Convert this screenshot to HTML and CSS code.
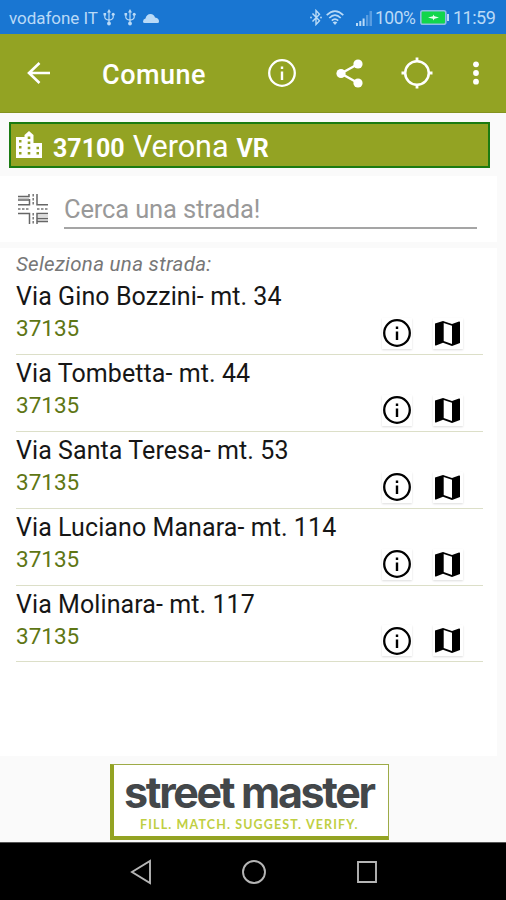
FILE: index.html
```html
<!DOCTYPE html>
<html lang="it">
<head>
<meta charset="utf-8">
<title>Comune</title>
<link rel="stylesheet" href="styles.css">
</head>
<body>
<svg class="defs" width="0" height="0">
  <symbol id="usb" viewBox="0 0 12 17"><path d="M6 3v11M1.800 5v3.200Q2 10.300 6 11.200 10 10.300 10.200 8.200V5" fill="none" stroke="currentColor" stroke-width="1.200"/><path d="M6 0l2 3.500H4zM.5 4h2.600v2.600H.5z"/><circle cx="10.200" cy="5.300" r="1.500"/><circle cx="6" cy="14.500" r="1.900"/></symbol>
  <symbol id="info" viewBox="0 0 28 28"><circle cx="14" cy="14" r="12.800" fill="none" stroke="currentColor" stroke-width="2.300"/><path d="M12.800 12.500h2.400V21h-2.400zM12.800 7.500h2.400v2.600h-2.400z"/></symbol>
  <symbol id="map" viewBox="0 0 26 27"><path d="M0 3.500L8 1l9 3 7-2.500q1-.3 1 .7V23l-8 3-9-3.200L1 25.500q-1 .4-1-.8z"/><path d="M8.700 3l8.300 2.700v18.200L8.700 21z" fill="#fff"/></symbol>
</svg>

<header class="status">
  <span class="carrier">vodafone IT</span>
  <svg class="usb"><use href="#usb"/></svg>
  <svg class="usb usb-second"><use href="#usb"/></svg>
  <svg class="cloud" viewBox="0 0 16 10"><path d="M1.500 10Q0 10 0 8.500 0 6 2.500 5.500 3.500 1 7.500 1q3.500 0 4.500 3.500Q16 5 16 8.500q0 1.500-1.500 1.500z"/></svg>
  <svg class="bt" viewBox="0 0 12 17"><path d="M2.500 4.500l7 7.300L6 15.500v-14l3.500 3.700-7 7.300" fill="none" stroke="currentColor" stroke-width="1.400"/><circle cx="1" cy="8.500" r=".9"/><circle cx="11" cy="8.500" r=".9"/></svg>
  <svg class="wifi" viewBox="0 0 18 15"><g fill="none" stroke="currentColor" stroke-width="1.700"><path d="M.7 5.200Q9-2.800 17.300 5.200M3.300 8Q9 2.300 14.700 8M5.800 10.700Q9 7.500 12.200 10.700"/></g><path d="M6.700 12.300Q9 10.500 11.300 12.300L9 15z"/></svg>
  <svg class="signal" viewBox="0 0 17 16"><path d="M0 13h2v3H0zM3.300 11h2v5h-2zM6.600 8.500h2V16h-2z"/><path d="M10 5h2.300v11H10zM13.500 1h2.500v15h-2.500z" opacity=".4"/></svg>
  <span class="percent">100%</span>
  <svg class="battery" viewBox="0 0 29 15"><rect x=".8" y=".8" width="25" height="13.400" rx="2" fill="#12d64c" stroke="#8fbde8" stroke-width="1.600"/><path d="M27 4h2v7h-2z"/><path d="M8 7.500l5-1.300V4.500l1.500 1.800 4.500 1.200-4.500 1.200-1.500 1.800V8.800z" fill="#e8fff0"/></svg>
  <span class="clock">11:59</span>
</header>

<nav class="toolbar">
  <svg class="back" viewBox="0 0 24 22"><path d="M23 11H2M12.500 1L2 11l10.500 10" fill="none" stroke="currentColor" stroke-width="2.600"/></svg>
  <h1>Comune</h1>
  <svg class="tool-info"><use href="#info"/></svg>
  <svg class="share" viewBox="0 0 27 29"><path d="M22 5L5 14.500 22 24" fill="none" stroke="currentColor" stroke-width="2.400"/><circle cx="22" cy="5" r="4.600"/><circle cx="5" cy="14.500" r="4.600"/><circle cx="22" cy="24" r="4.600"/></svg>
  <svg class="locate" viewBox="0 0 32 32"><circle cx="16" cy="16" r="11.800" fill="none" stroke="currentColor" stroke-width="2.500"/><path d="M14.600.5h2.800V5h-2.800zM14.600 27h2.800v4.500h-2.800zM.5 14.600H5v2.800H.5zM27 14.600h4.500v2.800H27z"/></svg>
  <svg class="more" viewBox="0 0 6 24"><circle cx="3" cy="3.300" r="2.900"/><circle cx="3" cy="12" r="2.900"/><circle cx="3" cy="20.700" r="2.900"/></svg>
</nav>

<main>
  <section class="city">
    <svg viewBox="0 0 26 27"><path fill-rule="evenodd" d="M0 6h8.500V4L13 0l4.500 4v8H26v15H0zM3 9v2.500h2.500V9zM3 15v2.500h2.500V15zM3 21v2.500h2.500V21zM11.700 5.500V8h2.600V5.500zM11.700 10.500V13h2.600v-2.500zM11.700 15.700v2.500h2.600v-2.500zM11.700 21v2.500h2.600V21zM20.500 15.700v2.500H23v-2.500zM20.500 21v2.500H23V21z"/></svg>
    <b class="zip">37100</b><span class="name">Verona</span><b class="prov">VR</b>
  </section>

  <section class="search">
    <svg viewBox="0 0 30 30"><path d="M0 2.500h11V0M0 6h11.500M0 10.800h11.500V5M19 0v10.800h11M0 19.500h11.500V30M19 30V19.500h11M19 24.500h11M19 27.500h11"/><path class="lane" d="M0 4.300h11M20 26h10M20 22h10"/><path class="dash" d="M0 15h11M19 15h11M15.200 0v11M15.200 19v11"/></svg>
    <div class="field">Cerca una strada!</div>
  </section>

  <section class="results">
    <p class="hint">Seleziona una strada:</p>
    <ul>
      <li><div><p class="street">Via Gino Bozzini- mt. 34</p><p class="code">37135</p></div><span class="btn"><svg><use href="#info"/></svg></span><span class="btn"><svg class="map"><use href="#map"/></svg></span></li>
      <li><div><p class="street">Via Tombetta- mt. 44</p><p class="code">37135</p></div><span class="btn"><svg><use href="#info"/></svg></span><span class="btn"><svg class="map"><use href="#map"/></svg></span></li>
      <li><div><p class="street">Via Santa Teresa- mt. 53</p><p class="code">37135</p></div><span class="btn"><svg><use href="#info"/></svg></span><span class="btn"><svg class="map"><use href="#map"/></svg></span></li>
      <li><div><p class="street">Via Luciano Manara- mt. 114</p><p class="code">37135</p></div><span class="btn"><svg><use href="#info"/></svg></span><span class="btn"><svg class="map"><use href="#map"/></svg></span></li>
      <li><div><p class="street">Via Molinara- mt. 117</p><p class="code">37135</p></div><span class="btn"><svg><use href="#info"/></svg></span><span class="btn"><svg class="map"><use href="#map"/></svg></span></li>
    </ul>
  </section>

  <div class="brand">
    <p class="brand-name">street master</p>
    <p class="brand-tag">FILL. MATCH. SUGGEST. VERIFY.</p>
  </div>
</main>

<footer class="navbar">
  <svg viewBox="0 0 22 26"><path d="M20 2v22L2 13z"/></svg>
  <svg viewBox="0 0 26 26"><circle cx="13" cy="13" r="11"/></svg>
  <svg viewBox="0 0 22 24"><path d="M2 2h18v20H2z"/></svg>
</footer>
</body>
</html>
```
FILE: styles.css
```css
* { box-sizing: border-box; }
body { margin: 0; width: 506px; height: 900px; display: flex; flex-direction: column; background: #fafafa; font-family: Roboto, sans-serif; overflow: hidden; }
h1, p, ul { margin: 0; padding: 0; font-weight: 400; }
svg { display: block; flex: none; fill: currentColor; }
.defs { position: absolute; }

.status { flex: none; height: 34px; display: flex; align-items: center; padding: 1px 11px 0 9px; background: #1976d2; color: #b9daf7; font-size: 18px; white-space: nowrap; }
.carrier { width: 94px; font-size: 17px; letter-spacing: -.05px; }
.usb { width: 12px; height: 17px; }
.usb-second { margin-left: 9px; }
.cloud { width: 16px; height: 10px; margin-left: 7px; }
.bt { width: 12px; height: 17px; margin: 0 4px 0 auto; }
.wifi { width: 18px; height: 15px; }
.signal { width: 17px; height: 16px; margin: 0 2px 0 12px; }
.percent { width: 45px; font-size: 17.500px; letter-spacing: -.5px; }
.battery { width: 29px; height: 15px; margin-right: 4px; }
.clock { width: 42px; font-size: 18px; letter-spacing: -.5px; }

.toolbar { flex: none; height: 79px; display: flex; align-items: center; padding: 0 27px 0 27px; background: #93a323; color: #fff; border-bottom: 1px solid #84931f; }
.back { width: 24px; height: 22px; }
.toolbar h1 { margin: 3px auto 0 51px; font-size: 27px; font-weight: 500; line-height: 32px; letter-spacing: .5px; }
.tool-info { width: 28px; height: 28px; margin-right: 40px; }
.share { width: 27px; height: 29px; margin-right: 38px; }
.locate { width: 32px; height: 32px; margin-right: 40px; }
.more { width: 6px; height: 24px; }

main { flex: 1; display: flex; flex-direction: column; min-height: 0; }
.city { flex: none; width: 481px; height: 46px; margin: 9px 0 8px 9px; padding: 0 0 0 5px; display: flex; align-items: baseline; border: 2px solid #1b7b12; background: #93a323; color: #fff; line-height: 46px; }
.city svg { width: 26px; height: 27px; align-self: center; margin-top: -1px; }
.zip { margin-left: 11px; font-size: 25px; }
.name { margin-left: 8px; font-size: 30.500px; }
.prov { margin-left: 8px; font-size: 25px; }

.search { flex: none; width: 497px; height: 66px; margin-bottom: 6px; padding: 18px 20px 0 18px; display: flex; background: #fff; }
.search svg { width: 30px; height: 30px; fill: none; stroke: #666; stroke-width: 1.500; }
.search .lane { stroke: #bbb; stroke-width: 1; }
.search .dash { stroke: #777; stroke-dasharray: 2.500 1.500; }
.field { flex: 1; height: 35px; margin-left: 16px; border-bottom: 2px solid #a5a5a5; color: #999; font-size: 25.500px; line-height: 30px; letter-spacing: -.15px; }

.results { flex: none; width: 497px; height: 508px; padding: 5px 14px 0 16px; background: #fff; }
.hint { height: 25px; font-size: 20.500px; font-style: italic; line-height: 23px; letter-spacing: .3px; color: #777; }
ul { list-style: none; }
li { height: 76.900px; display: flex; align-items: flex-end; border-bottom: 1px solid #dcdfc8; padding-bottom: 5px; }
li div { flex: 1; align-self: stretch; }
.street { margin-top: 4px; font-size: 25px; line-height: 30px; letter-spacing: .08px; color: #161616; white-space: nowrap; }
.code { margin-top: 1px; font-size: 22.500px; line-height: 30px; color: #5e7614; }
.btn { width: 30px; height: 31px; display: flex; align-items: center; justify-content: center; box-shadow: 0 1px 2px #ddd; color: #000; }
.btn + .btn { margin: 0 20px 0 21px; }
.btn svg { width: 28px; height: 28px; }
.btn .map { width: 26px; height: 27px; }

.brand { flex: none; width: 279px; height: 76px; margin: 8px 0 0 110px; border: 1px solid #9dab47; border-left: 4px solid #93a323; border-bottom: 4px solid #93a323; background: #fff; white-space: nowrap; }
.brand-name { height: 52px; padding-left: 10px; color: #43474a; font: 700 43px/54px Inter, sans-serif; letter-spacing: -2.350px; }
.brand-tag { padding-left: 26px; color: #bfcf42; font: 700 12.500px/16px Lato, sans-serif; letter-spacing: 1.130px; }

.navbar { flex: none; height: 58px; display: grid; grid-template-columns: 22px 26px 22px; column-gap: 89px; align-items: center; padding-left: 130px; border-top: 1px solid #555; background: #000; }
.navbar svg { width: 100%; height: 26px; fill: none; stroke: #b5b5b5; stroke-width: 1.900; }
```
